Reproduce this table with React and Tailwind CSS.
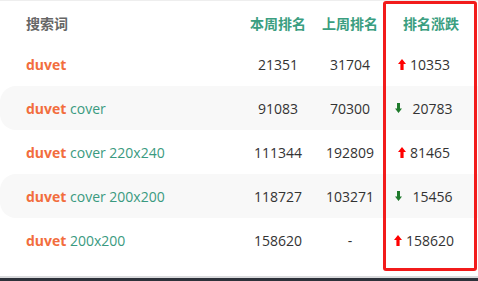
import React from 'react';

const rows = [
  { rest: '', cur: '21351', prev: '31704', dir: 'up', diff: '10353' },
  { rest: 'cover', cur: '91083', prev: '70300', dir: 'down', diff: '20783' },
  { rest: 'cover 220x240', cur: '111344', prev: '192809', dir: 'up', diff: '81465' },
  { rest: 'cover 200x200', cur: '118727', prev: '103271', dir: 'down', diff: '15456' },
  { rest: '200x200', cur: '158620', prev: '-', dir: 'up', diff: '158620' },
];

function UpArrow() {
  return (
    <svg width="8" height="11" viewBox="0 0 8 11" className="shrink-0">
      <path d="M4 0 L8 5 L5.6 5 L5.6 11 L2.4 11 L2.4 5 L0 5 Z" fill="#ff0000" />
    </svg>
  );
}

function DownArrow() {
  return (
    <svg width="7" height="10" viewBox="0 0 7 10" className="shrink-0">
      <path d="M2 0 L5 0 L5 5.5 L7 5.5 L3.5 10 L0 5.5 L2 5.5 Z" fill="#1f7a2c" />
    </svg>
  );
}

export default function App() {
  return (
    <div
      className="relative w-[478px] h-[281px] bg-white flex flex-col overflow-hidden"
      style={{ fontFamily: '"Open Sans", "Noto Sans CJK SC", sans-serif' }}
    >
      <div className="border-t border-[#eeeeee]">
        {/* header */}
        <div className="flex h-[41px] pt-[3px] items-center text-[14px] font-bold">
          <div className="w-[242px] pl-[26px] text-[#666666]">搜索词</div>
          <div className="w-[72px] text-center text-[#3a9e80]">本周排名</div>
          <div className="w-[72px] text-center text-[#3a9e80]">上周排名</div>
          <div className="w-[90px] text-center text-[#3a9e80]">排名涨跌</div>
        </div>

        {rows.map((r, i) => (
          <div
            key={i}
            className={`flex h-[44px] items-center text-[14px] ${i % 2 === 1 ? 'bg-[#f8f8f8] rounded-l-[16px]' : ''}`}
          >
            <div className="w-[242px] pl-[26px] whitespace-nowrap">
              <span className="font-bold text-[#f26d3d]">duvet</span>
              {r.rest && <span className="text-[#3a9a80]"> {r.rest}</span>}
            </div>
            <div className="w-[72px] text-center text-[#333333]">{r.cur}</div>
            <div className="w-[72px] text-center text-[#333333]">{r.prev}</div>
            <div className="w-[90px] pr-[14px] flex items-center justify-center text-[#333333]">
              {r.dir === 'up' ? (
                <span className="flex items-center gap-[4px]">
                  <UpArrow />
                  <span>{r.diff}</span>
                </span>
              ) : (
                <span className="flex items-center gap-[10px]">
                  <DownArrow />
                  <span>{r.diff}</span>
                </span>
              )}
            </div>
          </div>
        ))}
      </div>

      <div className="flex-1" />
      <div className="h-[2px] bg-[#d9dadc]" />
      <div className="h-[3px] bg-[#2d323a]" />

      {/* annotation box */}
      <div className="absolute left-[383px] top-[1px] w-[94px] h-[270px] border-[3px] border-[#f21b1b] rounded-[3px]" />
    </div>
  );
}
